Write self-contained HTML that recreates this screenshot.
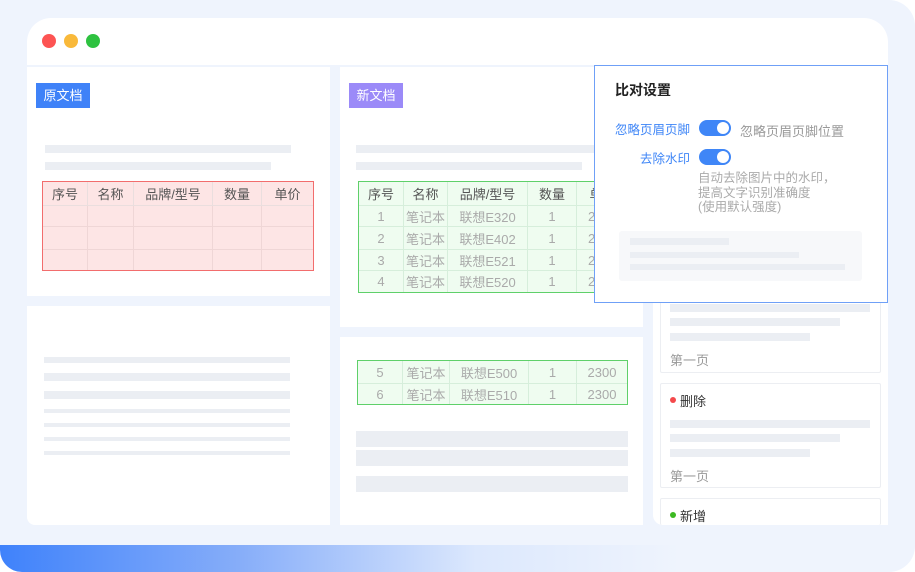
<!DOCTYPE html>
<html><head><meta charset="utf-8"><style>
*{margin:0;padding:0;box-sizing:border-box}
body{width:915px;height:572px;overflow:hidden;background:#fff;font-family:"Liberation Sans","Noto Sans CJK SC",sans-serif;position:relative}
.a{position:absolute}
.sk{position:absolute;background:#ebeef3}
table{position:absolute;border-collapse:collapse;font-size:13px;text-align:center;table-layout:fixed}
td{border:1px solid #eadede;color:#aaa;padding:0;white-space:nowrap;overflow:hidden}
.red{background:#fde5e5;outline:1.5px solid #f26d6d;outline-offset:-1px}
.red td{border-color:#efd6d6}
.grn{background:#effcf0;outline:1.5px solid #5fd06a;outline-offset:-1px}
.grn td{border-color:#d6eedb}
th{font-weight:normal;color:#555;font-size:13px;border:1px solid #eadede}
.grn th{border-color:#d6eedb}
.tog{position:absolute;width:32px;height:16px;border-radius:8px;background:#3f86f7}
.tog::after{content:"";position:absolute;right:2px;top:2px;width:12px;height:12px;border-radius:50%;background:#fff}
.card{position:absolute;left:660px;width:221px;background:#fff;border:1px solid #eceef2;border-radius:2px}
</style></head><body>
<div class="a" style="left:0;top:0;width:915px;height:572px;background:#eff4fd;border-radius:0 26px 26px 26px"></div>
<div class="a" style="left:0;top:545px;width:680px;height:27px;border-radius:0 0 0 22px;background:linear-gradient(90deg,#3f82fb 0%,#86adf9 35%,#dce8fd 70%,rgba(239,244,253,0) 100%)"></div>
<div class="a" style="left:27px;top:18px;width:861px;height:47px;background:#fff;border-radius:24px 24px 0 0"></div>
<div class="a" style="left:42px;top:34px;width:14px;height:14px;border-radius:50%;background:#fd5453"></div>
<div class="a" style="left:64px;top:34px;width:14px;height:14px;border-radius:50%;background:#f9b93a"></div>
<div class="a" style="left:86px;top:34px;width:14px;height:14px;border-radius:50%;background:#2ec240"></div>

<div class="a" style="left:27px;top:67px;width:303px;height:229px;background:#fff"></div>
<div class="a" style="left:27px;top:306px;width:303px;height:219px;background:#fff;border-radius:0 0 0 8px"></div>
<div class="a" style="left:36px;top:83px;width:54px;height:25px;background:#3f82f8;color:#fff;font-size:13px;line-height:25px;text-align:center">原文档</div>
<div class="sk" style="left:45px;top:145px;width:246px;height:8px"></div>
<div class="sk" style="left:45px;top:162px;width:226px;height:8px"></div>
<table class="red" style="left:42px;top:181px;width:271px">
<colgroup><col style="width:45px"><col style="width:46px"><col style="width:79px"><col style="width:49px"><col style="width:52px"></colgroup>
<tr style="height:24px"><th>序号</th><th>名称</th><th>品牌/型号</th><th>数量</th><th>单价</th></tr>
<tr style="height:21px"><td></td><td></td><td></td><td></td><td></td></tr>
<tr style="height:23px"><td></td><td></td><td></td><td></td><td></td></tr>
<tr style="height:21px"><td></td><td></td><td></td><td></td><td></td></tr>
</table>
<div class="sk" style="left:44px;top:357px;width:246px;height:6px"></div>
<div class="sk" style="left:44px;top:373px;width:246px;height:8px"></div>
<div class="sk" style="left:44px;top:391px;width:246px;height:8px"></div>
<div class="sk" style="left:44px;top:409px;width:246px;height:4px"></div>
<div class="sk" style="left:44px;top:423px;width:246px;height:4px"></div>
<div class="sk" style="left:44px;top:437px;width:246px;height:4px"></div>
<div class="sk" style="left:44px;top:451px;width:246px;height:4px"></div>

<div class="a" style="left:340px;top:67px;width:303px;height:260px;background:#fff"></div>
<div class="a" style="left:340px;top:337px;width:303px;height:188px;background:#fff"></div>
<div class="a" style="left:349px;top:83px;width:54px;height:25px;background:#9b8af8;color:#fff;font-size:13px;line-height:25px;text-align:center">新文档</div>
<div class="sk" style="left:356px;top:145px;width:260px;height:8px"></div>
<div class="sk" style="left:356px;top:162px;width:226px;height:8px"></div>
<table class="grn" style="left:358px;top:181px;width:270px">
<colgroup><col style="width:45px"><col style="width:44px"><col style="width:80px"><col style="width:49px"><col style="width:52px"></colgroup>
<tr style="height:24px"><th>序号</th><th>名称</th><th>品牌/型号</th><th>数量</th><th>单价</th></tr>
<tr style="height:21px"><td>1</td><td>笔记本</td><td>联想E320</td><td>1</td><td>2300</td></tr>
<tr style="height:23px"><td>2</td><td>笔记本</td><td>联想E402</td><td>1</td><td>2300</td></tr>
<tr style="height:21px"><td>3</td><td>笔记本</td><td>联想E521</td><td>1</td><td>2300</td></tr>
<tr style="height:22px"><td>4</td><td>笔记本</td><td>联想E520</td><td>1</td><td>2300</td></tr>
</table>
<table class="grn" style="left:357px;top:360px;width:270px">
<colgroup><col style="width:45px"><col style="width:47px"><col style="width:79px"><col style="width:48px"><col style="width:51px"></colgroup>
<tr style="height:23px"><td>5</td><td>笔记本</td><td>联想E500</td><td>1</td><td>2300</td></tr>
<tr style="height:21px"><td>6</td><td>笔记本</td><td>联想E510</td><td>1</td><td>2300</td></tr>
</table>
<div class="sk" style="left:356px;top:431px;width:272px;height:16px"></div>
<div class="sk" style="left:356px;top:450px;width:272px;height:16px"></div>
<div class="sk" style="left:356px;top:476px;width:272px;height:16px"></div>

<div class="a" style="left:653px;top:67px;width:235px;height:458px;background:#fff;border-radius:0 0 0 10px"></div>
<div class="card" style="top:250px;height:123px">
<div class="sk" style="left:9px;top:53px;width:200px;height:8px"></div>
<div class="sk" style="left:9px;top:67px;width:170px;height:8px"></div>
<div class="sk" style="left:9px;top:82px;width:140px;height:8px"></div>
<div class="a" style="left:9px;top:99px;font-size:13px;color:#999">第一页</div>
</div>
<div class="card" style="top:383px;height:105px">
<div class="a" style="left:9px;top:13px;width:6px;height:6px;border-radius:50%;background:#f4494b"></div>
<div class="a" style="left:19px;top:7px;font-size:13px;color:#333">删除</div>
<div class="sk" style="left:9px;top:36px;width:200px;height:8px"></div>
<div class="sk" style="left:9px;top:50px;width:170px;height:8px"></div>
<div class="sk" style="left:9px;top:65px;width:140px;height:8px"></div>
<div class="a" style="left:9px;top:82px;font-size:13px;color:#999">第一页</div>
</div>
<div class="card" style="top:498px;height:27px;border-bottom:none">
<div class="a" style="left:9px;top:13px;width:6px;height:6px;border-radius:50%;background:#3cb922"></div>
<div class="a" style="left:19px;top:7px;font-size:13px;color:#333">新增</div>
</div>

<div class="a" style="left:594px;top:65px;width:294px;height:238px;background:#fff;border:1.5px solid #6fa0f7"></div>
<div class="a" style="left:615px;top:80px;font-size:14px;font-weight:bold;color:#222">比对设置</div>
<div class="a" style="left:590px;top:119px;width:100px;text-align:right;font-size:12.5px;color:#3f86f7">忽略页眉页脚</div>
<div class="tog" style="left:699px;top:120px"></div>
<div class="a" style="left:740px;top:121px;font-size:13px;color:#999">忽略页眉页脚位置</div>
<div class="a" style="left:590px;top:148px;width:100px;text-align:right;font-size:12.5px;color:#3f86f7">去除水印</div>
<div class="tog" style="left:699px;top:149px"></div>
<div class="a" style="left:698px;top:171px;font-size:12.5px;line-height:14.5px;color:#aaa">自动去除图片中的水印，<br>提高文字识别准确度<br>(使用默认强度)</div>
<div class="a" style="left:619px;top:231px;width:243px;height:50px;background:#f7f8fa;border-radius:3px"></div>
<div class="sk" style="left:630px;top:238px;width:99px;height:7px"></div>
<div class="sk" style="left:630px;top:252px;width:169px;height:6px"></div>
<div class="sk" style="left:630px;top:264px;width:215px;height:6px"></div>
</body></html>
